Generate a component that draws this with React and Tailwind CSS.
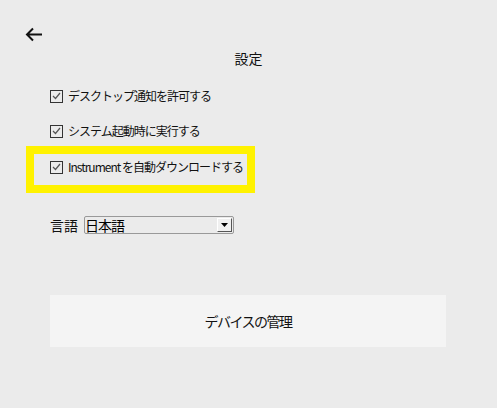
import { useState } from 'react'

const jp = { fontFamily: '"Noto Sans CJK JP", "Noto Sans", sans-serif' }

function Check({ checked, onChange, label }) {
  return (
    <label className="flex items-center h-5 gap-[5px] cursor-default select-none whitespace-nowrap" onClick={onChange}>
      <span className="w-[13px] h-[13px] shrink-0 border border-[#333] bg-[#ebebeb] flex items-center justify-center">
        {checked && (
          <svg width="9" height="8" viewBox="0 0 9 8">
            <path d="M1 4l2.5 2.5L8 1" fill="none" stroke="#555" strokeWidth="1.2" />
          </svg>
        )}
      </span>
      <span className="text-[12px] leading-5 tracking-[-1px] text-[#111]">{label}</span>
    </label>
  )
}

export default function App() {
  const [opts, setOpts] = useState({ notify: true, startup: true, instrument: true })
  const toggle = (k) => setOpts({ ...opts, [k]: !opts[k] })

  return (
    <div className="w-[497px] h-[408px] bg-[#ebebeb] overflow-hidden" style={jp}>
      <div className="pt-[27px] pl-[25px]">
        <svg width="18" height="15" viewBox="0 0 18 15">
          <path d="M17 7.5H2M8 1.5L2 7.5l6 6" fill="none" stroke="#111" strokeWidth="2" />
        </svg>
      </div>

      <h1 className="mt-[6px] text-center text-[14px] leading-5 text-[#111]">設定</h1>

      <div className="mt-[18px] pl-[50px]">
        <Check checked={opts.notify} onChange={() => toggle('notify')} label="デスクトップ通知を許可する" />
      </div>
      <div className="mt-[15px] pl-[50px]">
        <Check checked={opts.startup} onChange={() => toggle('startup')} label="システム起動時に実行する" />
      </div>

      {/* highlighted option */}
      <div className="mt-[5px] ml-[26px] w-[229px] h-[47px] border-[8px] border-[#fff200] pl-[16px] pt-[3px]">
        <Check checked={opts.instrument} onChange={() => toggle('instrument')} label="Instrument を自動ダウンロードする" />
      </div>

      <div className="mt-[23px] pl-[50px] flex items-center gap-[6px]">
        <span className="text-[14px] leading-[17px] text-[#111]">言語</span>
        <div className="w-[150px] h-[18px] border border-[#999] rounded-[2px] bg-[#ebebeb] flex items-center justify-between pr-[1px]">
          <span className="text-[14px] leading-4 tracking-[-1px] text-[#000]">日本語</span>
          <span className="w-[15px] h-[14px] bg-[#f0f0f0] border-r border-b border-[#555] border-t border-l border-t-white border-l-white flex items-center justify-center">
            <svg width="7" height="4" viewBox="0 0 7 4">
              <path d="M0 0h7L3.5 4z" fill="#000" />
            </svg>
          </span>
        </div>
      </div>

      <div className="mt-[61px] ml-[50px] w-[396px] h-[52px] bg-[#f4f4f4] flex items-center justify-center">
        <span className="text-[14px] tracking-[-1.5px] text-[#111]">デバイスの管理</span>
      </div>
    </div>
  )
}
